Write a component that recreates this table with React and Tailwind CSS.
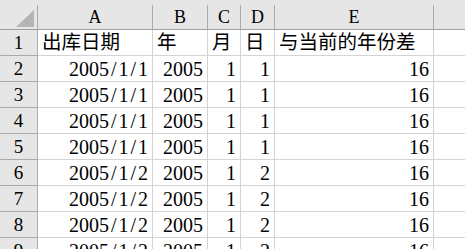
import React from "react";

const cols = ["A", "B", "C", "D", "E"];
const rows = [
  ["2005/1/1", "2005", "1", "1", "16"],
  ["2005/1/1", "2005", "1", "1", "16"],
  ["2005/1/1", "2005", "1", "1", "16"],
  ["2005/1/1", "2005", "1", "1", "16"],
  ["2005/1/2", "2005", "1", "2", "16"],
  ["2005/1/2", "2005", "1", "2", "16"],
  ["2005/1/2", "2005", "1", "2", "16"],
  ["2005/1/2", "2005", "1", "2", "16"],
];
const heads = ["出库日期", "年", "月", "日", "与当前的年份差"];

const gridCols = "grid grid-cols-[38px_115px_55px_33px_34px_159px_1fr]";
const font = { fontFamily: '"Liberation Serif", "Noto Sans CJK SC", serif' };

function Val({ v }) {
  if (!v.includes("/")) return v;
  const parts = v.split("/");
  return (
    <>
      {parts.map((p, i) => (
        <React.Fragment key={i}>
          {i > 0 && <span className="mx-[2px]">/</span>}
          {p}
        </React.Fragment>
      ))}
    </>
  );
}

export default function App() {
  return (
    <div className="w-[465px] h-[249px] overflow-hidden bg-white text-black" style={font}>
      <div className={`${gridCols} h-[30px] bg-[#e6e6e6] border-b border-[#9e9e9e]`}>
        <div className="relative border-r border-[#ababab] mt-[5px]">
          <div className="absolute left-[16px] top-[5px] w-0 h-0 border-l-[18px] border-l-transparent border-b-[17px] border-b-[#b4b4b4]" />
        </div>
        {cols.map((c) => (
          <div key={c} className="mt-[5px] border-r border-[#ababab] flex items-center justify-center text-[18px] leading-none pb-[1px]">
            {c}
          </div>
        ))}
        <div className="mt-[5px]" />
      </div>
      <div className={`${gridCols} h-[26px]`}>
        <div className="bg-[#e6e6e6] border-r border-b border-[#ababab] flex items-center justify-center text-[19px] leading-none">1</div>
        {heads.map((h, i) => (
          <div key={i} className="border-r border-b border-[#d4d4d4] flex items-center pl-[4px] text-[19.5px] leading-none whitespace-nowrap overflow-hidden">
            {h}
          </div>
        ))}
        <div className="border-b border-[#d4d4d4]" />
      </div>
      {rows.map((r, ri) => (
        <div key={ri} className={`${gridCols} h-[26px]`}>
          <div className="bg-[#e6e6e6] border-r border-b border-[#ababab] flex items-center justify-center text-[19px] leading-none">{ri + 2}</div>
          {r.map((v, i) => (
            <div key={i} className="border-r border-b border-[#d4d4d4] flex items-center justify-end pr-[4px] text-[20px] leading-none whitespace-nowrap overflow-hidden">
              <Val v={v} />
            </div>
          ))}
          <div className="border-b border-[#d4d4d4]" />
        </div>
      ))}
    </div>
  );
}
